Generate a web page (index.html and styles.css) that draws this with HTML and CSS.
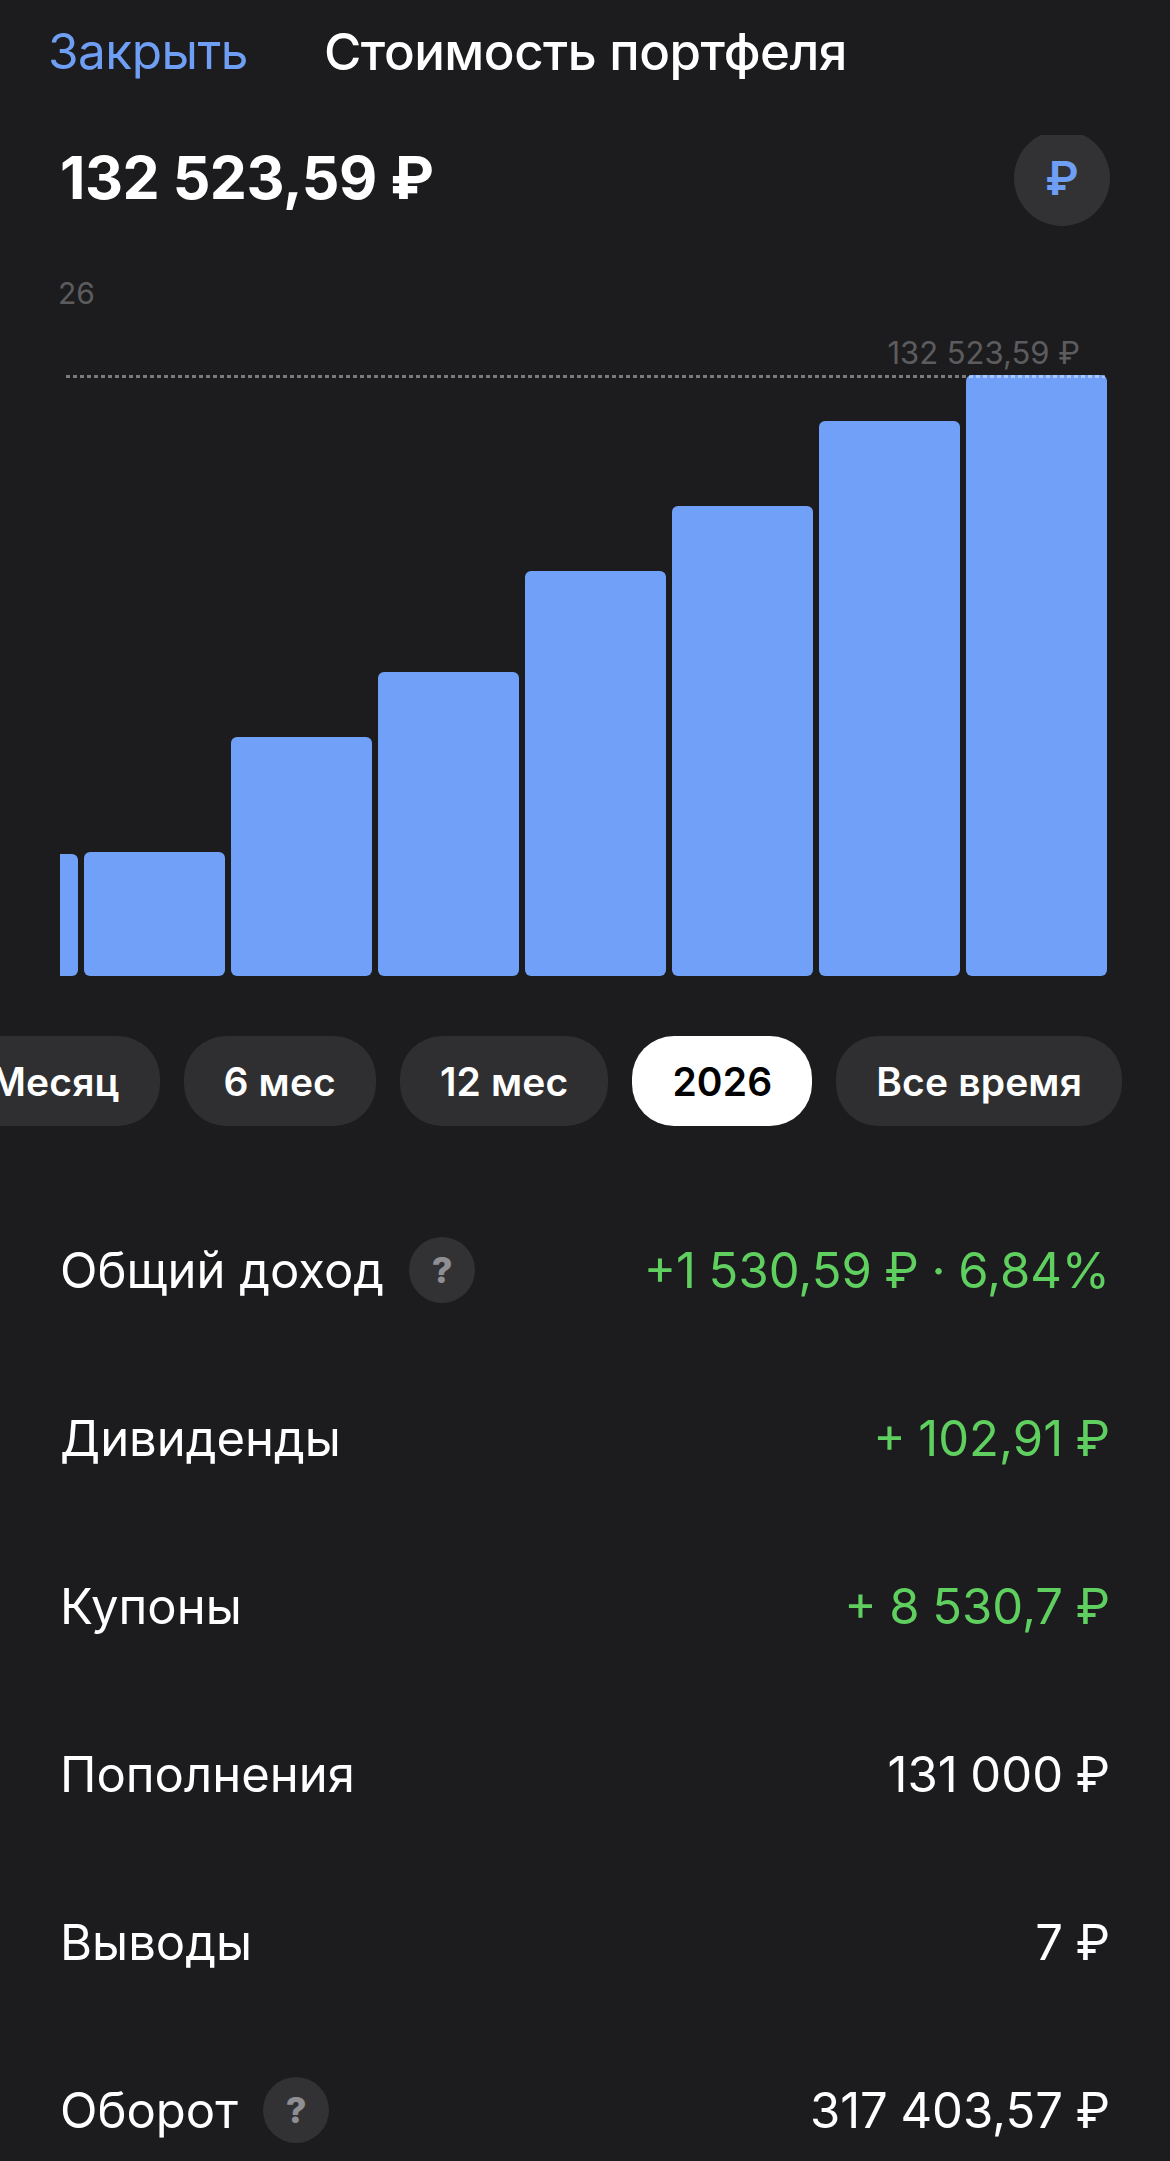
FILE: index.html
```html
<!DOCTYPE html>
<html lang="ru">
<head>
<meta charset="utf-8">
<title>Стоимость портфеля</title>
<link rel="stylesheet" href="styles.css">
</head>
<body>
<main class="screen">
  <header class="nav">
    <span class="nav-close">Закрыть</span>
    <span class="nav-title">Стоимость портфеля</span>
  </header>
  <section class="total">
    <span class="total-value">132 523,59 ₽</span>
    <span class="cur-clip"><span class="cur-btn">₽</span></span>
  </section>
  <section class="chart">
    <div class="chart-year">26</div>
    <div class="chart-peak">132 523,59 ₽</div>
    <div class="chart-line"></div>
    <div class="bars">
      <div class="bar bar-cut h-122"></div>
      <div class="bar h-124"></div>
      <div class="bar h-239"></div>
      <div class="bar h-304"></div>
      <div class="bar h-405"></div>
      <div class="bar h-470"></div>
      <div class="bar h-555"></div>
      <div class="bar h-601"></div>
    </div>
  </section>
  <nav class="pills">
    <span class="pill">Месяц</span>
    <span class="pill">6 мес</span>
    <span class="pill">12 мес</span>
    <span class="pill pill-on">2026</span>
    <span class="pill">Все время</span>
  </nav>
  <section class="rows">
    <div class="row"><span class="row-label">Общий доход <span class="help">?</span></span><span class="row-val green">+1 530,59 ₽ · 6,84%</span></div>
    <div class="row"><span class="row-label">Дивиденды</span><span class="row-val green">+ 102,91 ₽</span></div>
    <div class="row"><span class="row-label">Купоны</span><span class="row-val green">+ 8 530,7 ₽</span></div>
    <div class="row"><span class="row-label">Пополнения</span><span class="row-val">131 000 ₽</span></div>
    <div class="row"><span class="row-label">Выводы</span><span class="row-val">7 ₽</span></div>
    <div class="row"><span class="row-label">Оборот <span class="help">?</span></span><span class="row-val">317 403,57 ₽</span></div>
  </section>
</main>
</body>
</html>
```
FILE: styles.css
```css
* { box-sizing: border-box; }
html, body { margin: 0; height: 100%; }
body { background: #1c1c1e; overflow: hidden; font-family: Inter, "Noto Sans", sans-serif; color: #fff; }
.screen { width: 1170px; height: 2161px; overflow: hidden; }

.nav { display: flex; align-items: center; height: 52px; margin-top: 25px; padding-left: 48px; gap: 76px; }
.nav-close { font-size: 49.5px; font-weight: 400; color: #6f9ff5; letter-spacing: -0.5px; }
.nav-title { font-size: 51px; font-weight: 500; letter-spacing: -0.5px; }

.total { display: flex; justify-content: space-between; align-items: center; height: 91px; margin-top: 58px; padding: 0 60px 0 60px; }
.total-value { font-size: 59px; font-weight: 700; letter-spacing: -0.5px; margin-bottom: 6px; }
.cur-clip { display: block; width: 96px; height: 91px; overflow: hidden; }
.cur-btn { display: flex; align-items: center; justify-content: center; width: 96px; height: 96px; margin-top: -5px; border-radius: 50%; background: #323234; color: #6f9ff5; font-size: 46px; font-weight: 600; }

.chart { height: 701px; margin-top: 49px; padding-left: 60px; display: flex; flex-direction: column; }
.chart-year { font-size: 30px; line-height: 36px; color: #5c5c5f; margin-left: -2px; height: 36px; }
.chart-peak { font-size: 31px; line-height: 36px; color: #5c5c5f; align-self: flex-end; margin-right: 90px; margin-top: 24px; }
.chart-line { position: relative; z-index: 1; height: 3px; margin: 4px 65px -3px 6px; background: repeating-linear-gradient(90deg, rgba(255, 255, 255, 0.42) 0 4px, transparent 4px 7px); }
.bars { flex: 1; display: flex; align-items: flex-end; gap: 6px; }
.bar { width: 141px; background: #70a0f8; border-radius: 6px; flex: none; }
.bar-cut { width: 18px; border-radius: 0 6px 6px 0; }
.h-122 { height: 122px; }
.h-124 { height: 124px; }
.h-239 { height: 239px; }
.h-304 { height: 304px; }
.h-405 { height: 405px; }
.h-470 { height: 470px; }
.h-555 { height: 555px; }
.h-601 { height: 601px; }

.pills { display: flex; gap: 24px; margin-top: 60px; margin-left: -50px; }
.pill { height: 90px; display: flex; align-items: center; padding: 0 40px; border-radius: 42px; background: #2f2f31; font-size: 39px; font-weight: 600; letter-spacing: 0.15px; flex: none; }
.pill-on { background: #fff; color: #000; }

.rows { margin-top: 60px; padding: 0 60px 0 60px; }
.row { display: flex; justify-content: space-between; align-items: center; height: 168px; font-size: 49px; font-weight: 400; }
.row-label { display: flex; align-items: center; gap: 25px; }
.row-val { word-spacing: -1.2px; }
.green { color: #5fcf5f; }
.help { display: flex; align-items: center; justify-content: center; width: 66px; height: 66px; border-radius: 50%; background: #323234; color: #8e8e93; font-size: 36px; font-weight: 800; }
```
